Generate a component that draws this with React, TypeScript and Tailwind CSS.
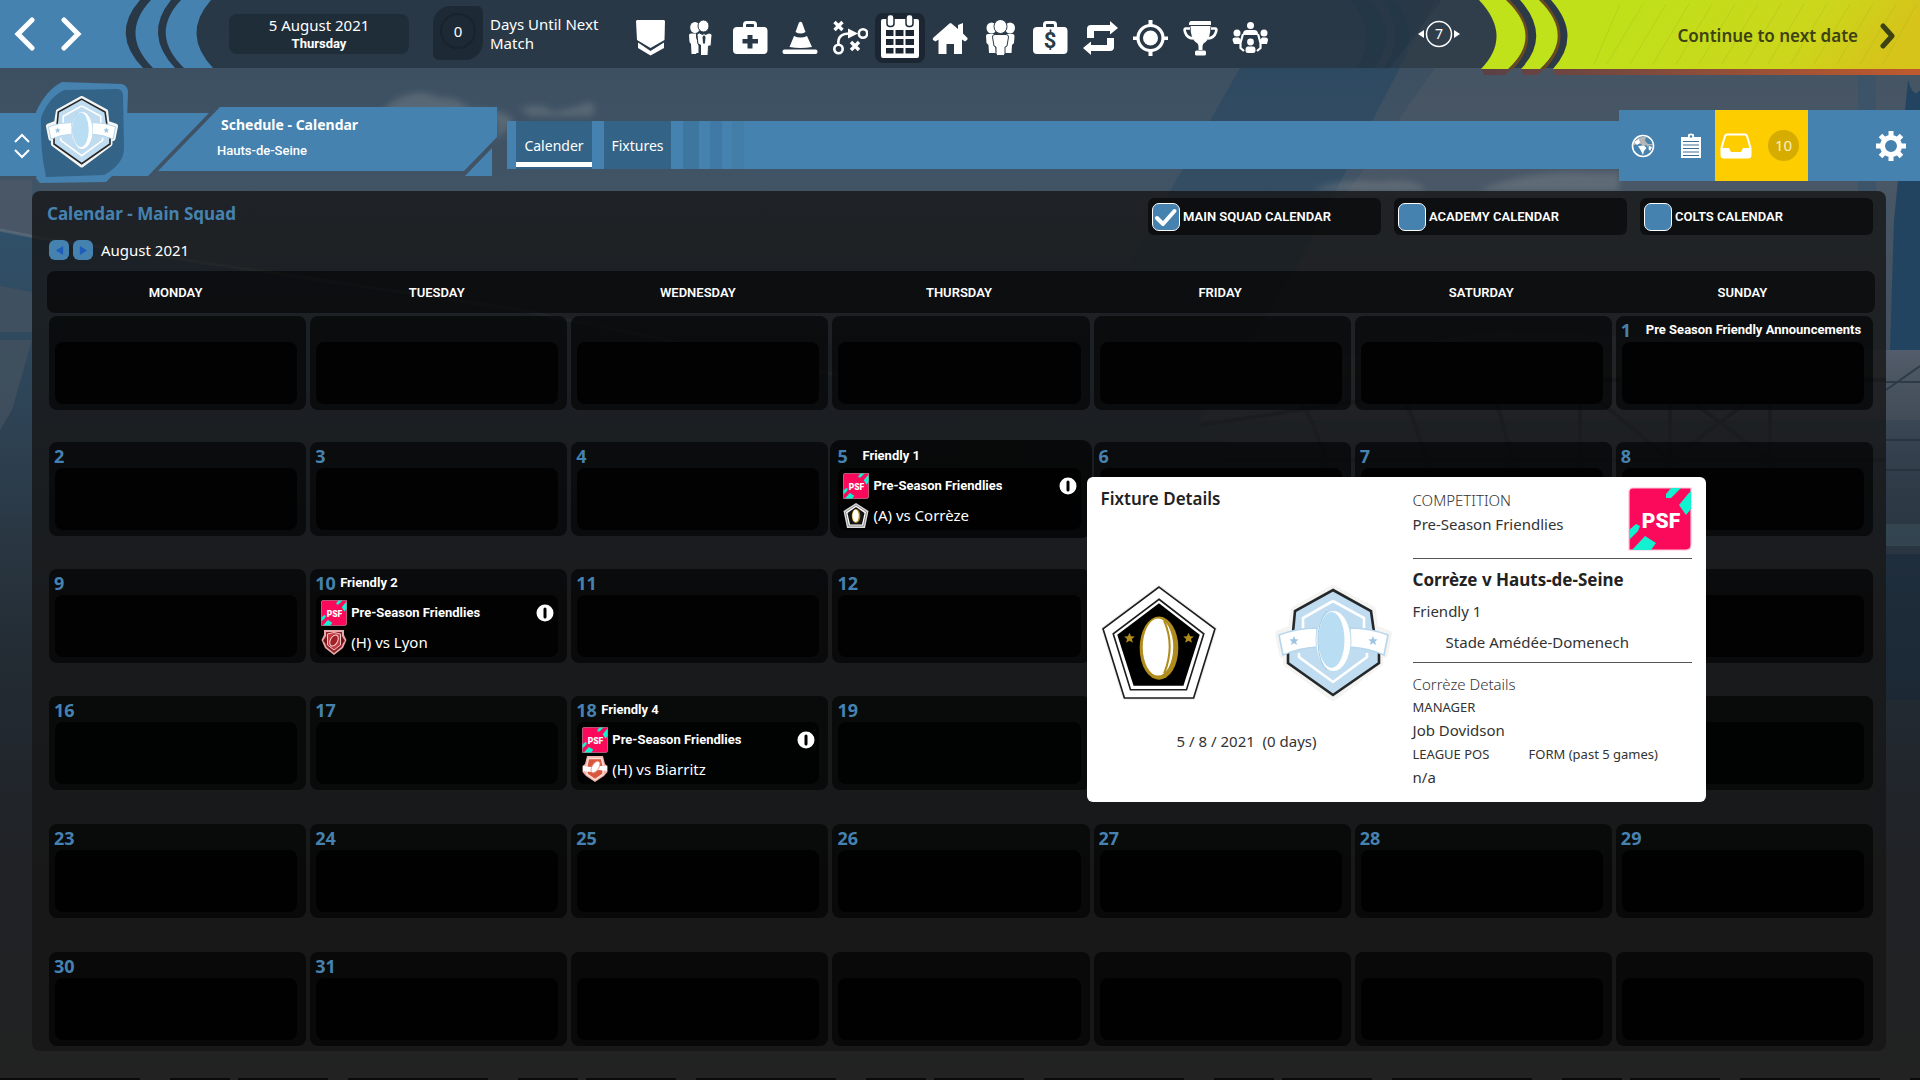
import type { ReactNode } from "react";

/* ---------- club and competition artwork ---------- */

function HautsCrest({ className, title }: { className: string; title: string }) {
  return (
    <svg viewBox="0 0 117 117" className={className} role="img" aria-label={title}>
      <path
        d="M58 4 97 25 99 44 113 49 109 69 104 70V78L58 112 12 78V70L8 69 4 49 17 44 20 25Z"
        fill="#f4f4f2"
        stroke="#f4f4f2"
        strokeWidth="8"
        strokeLinejoin="round"
      />
      <path d="M58 5 96 26 99 47 104 68V78L58 110 13 78V68L18 47 20 26Z" fill="#bfdcf0" stroke="#25282b" strokeWidth="2.6" />
      <path d="M58 16 89 33V48M58 16 28 33V48M24 68V72L58 97 92 72V68" fill="none" stroke="#fff" strokeWidth="2.6" />
      <path d="M4 50Q22 43 42 43V62Q24 63 8 70ZM113 50Q95 43 75 43V62Q93 63 109 70Z" fill="#fff" stroke="#b5d6ec" strokeWidth="1.6" />
      <ellipse cx="58.5" cy="56" rx="18" ry="32" fill="#bfdcf0" />
      <ellipse cx="58.5" cy="56" rx="17" ry="30" fill="#fff" />
      <ellipse cx="56.5" cy="55" rx="13" ry="28" fill="#b9def3" />
      <path d="M52 26Q42 38 43 58T52 85" fill="none" stroke="#9cc8e2" strokeWidth="1" />
      <path
        d="m19 51 1.3 3.2 3.4.2-2.6 2.2.9 3.4-3-1.9-3 1.9.9-3.4-2.6-2.2 3.4-.2ZM98 51l1.3 3.2 3.4.2-2.6 2.2.9 3.4-3-1.9-3 1.9.9-3.4-2.6-2.2 3.4-.2Z"
        fill="#9dc5e0"
      />
    </svg>
  );
}

function CorrezeCrest({ className, title }: { className: string; title: string }) {
  return (
    <svg viewBox="0 0 114 114" className={className} role="img" aria-label={title}>
      <path d="M57 2 112 43 91 111H23L2 43Z" fill="#efefef" stroke="#efefef" strokeWidth="4" strokeLinejoin="round" />
      <path d="M57 2 112 43 91 111H23L2 43Z" fill="#fff" stroke="#1d1d1d" strokeWidth="1.6" />
      <path d="M57 14 101 48 84 103H29L12 48Z" fill="#fff" stroke="#1d1d1d" strokeWidth="1.6" />
      <path d="M57 18 97 49 81 99H32L16 49Z" fill="#000" />
      <ellipse cx="57" cy="62" rx="19" ry="31" fill="#b08c1c" />
      <ellipse cx="56" cy="61" rx="15" ry="28" fill="#fff" />
      <path d="M62 35Q73 60 62 87" fill="none" stroke="#b08c1c" strokeWidth="2" />
      <path
        d="m28 47 1.5 3.4 3.7.3-2.8 2.4.9 3.7-3.3-2-3.3 2 .9-3.7-2.8-2.4 3.7-.3ZM86 47l1.5 3.4 3.7.3-2.8 2.4.9 3.7-3.3-2-3.3 2 .9-3.7-2.8-2.4 3.7-.3Z"
        fill="#b08c1c"
      />
    </svg>
  );
}

function SmallCorrezeCrest({ className, title }: { className: string; title: string }) {
  return (
    <svg viewBox="0 0 26 26" className={className} role="img" aria-label={title}>
      <path d="M13 1 25.500 9 22 26H4L.5 9Z" fill="#d9d9d9" />
      <path d="M13 3 23.500 10 20.500 24H5.500L2.500 10Z" fill="#fff" stroke="#8a8a8a" strokeWidth="1" />
      <path d="M13 5 21.500 11 19 22.500H7L4.500 11Z" fill="#141414" />
      <ellipse cx="13" cy="14" rx="4.300" ry="7" fill="#b08c1c" />
      <ellipse cx="12.600" cy="13.800" rx="3.200" ry="6.200" fill="#fff" />
    </svg>
  );
}

function LyonCrest({ className, title }: { className: string; title: string }) {
  return (
    <svg viewBox="0 0 26 26" className={className} role="img" aria-label={title}>
      <path d="M3 1H23V6L25.5 11 22 19 13 26 4 19 .5 11 3 6Z" fill="#e7a9aa" />
      <path d="M5 3H21V7L23.500 11 20.500 18 13 24 5.500 18 2.500 11 5 7Z" fill="#8f2026" />
      <path d="M6.500 5 13 3.500 19.500 5V16L13 21 6.500 16Z" fill="#c23a42" stroke="#efc3c3" strokeWidth="1" />
      <path d="M2 12 6 8V15Z M24 12 20 8V15Z" fill="#6d1519" />
      <ellipse cx="13" cy="11.500" rx="3.600" ry="6" transform="rotate(28 13 11.500)" fill="#a11f27" stroke="#f5d5d5" strokeWidth="1" />
    </svg>
  );
}

function BiarritzCrest({ className, title }: { className: string; title: string }) {
  return (
    <svg viewBox="0 0 26 26" className={className} role="img" aria-label={title}>
      <path d="M5 0H21L23 8 25.500 10V16L22 20 13 26 4 20 .5 16V10L3 8Z" fill="#f1b3aa" />
      <path d="M6.500 2.500H19.500L21 9V18L13 23.500 5 18V9Z" fill="#d9573f" stroke="#fbdcd6" strokeWidth="1.500" />
      <path d="M1 10 9 11 17 10 25 10V15L17 14 9 16 1 15Z" fill="#fff" />
      <ellipse cx="13.500" cy="11" rx="3.400" ry="6.500" transform="rotate(32 13.500 11)" fill="#fff" stroke="#e8897a" strokeWidth=".8" />
    </svg>
  );
}

function PsfLogo({ className }: { className: string }) {
  return (
    <svg viewBox="0 0 64 64" className={className} role="img" aria-label="PSF">
      <path d="M5 1H63V58Q63 63 58 63H1V5Q1 1 5 1Z" fill="#fb0a5c" stroke="#ffc2d6" strokeWidth="1.200" />
      <path d="M43 1H53L43 11H38V7ZM63 4V22L58 28 51 18 60 7Q62 5 63 4ZM1 43 8 37 12 39 10 44 1 53ZM5 62 17 49 28 56 23 63H4Z" fill="#12f2d0" />
      <text x="33" y="41" textAnchor="middle" className="fill-white font-['Roboto',sans-serif] text-[21px] font-black">
        PSF
      </text>
    </svg>
  );
}

/* ---------- navigation icons, all on a 36 x 36 grid ---------- */

function Glyph({ children }: { children: ReactNode }) {
  return (
    <svg viewBox="0 0 36 36" className="size-9" fill="currentColor" aria-hidden="true">
      {children}
    </svg>
  );
}

const navItems: { label: string; icon: ReactNode; active?: boolean }[] = [
  {
    label: "Club",
    icon: (
      <Glyph>
        <path d="M4 1 5 0H32L33 1 32.500 20 18.500 28 5 20Z" />
        <path d="M6 22.500 18.500 31 32 22.500V28L18.500 35.500 6 28Z" />
      </Glyph>
    ),
  },
  {
    label: "Staff",
    icon: (
      <Glyph>
        <ellipse cx="13" cy="7.500" rx="4.800" ry="5.500" />
        <path d="M7 15Q7 13.500 9 13.500H14V17L16.500 26V33H14.500L14 34H9.500L9 24 7.500 22Z" />
        <ellipse cx="21.500" cy="6" rx="5.500" ry="6" className="stroke-[#283a49]" />
        <path d="M15 15Q15 13 17.500 13L20.500 14.500 22 13.500 23.500 14.500 27 13Q30 13 30 15.500L29 26H26.500L26 35.500H18.500V25L16 24Z" className="stroke-[#283a49]" />
        <path d="m22 15 1.500 2-.5 6-1 1-1-1-.5-6Z" className="fill-[#283a49]" />
      </Glyph>
    ),
  },
  {
    label: "Medical",
    icon: (
      <Glyph>
        <path d="M11 7V4.500Q11 1 14.500 1H21.500Q25 1 25 4.500V7H32Q35.500 7 35.500 11V30Q35.500 34 31.500 34H5Q1 34 1 30V11Q1 7 5 7ZM14 7H22V5Q22 4 21 4H15Q14 4 14 5ZM15.500 15V19H10.500V23.500H15.500V28.500H20.500V23.500H26V19H20.500V15Z" fillRule="evenodd" />
      </Glyph>
    ),
  },
  {
    label: "Training",
    icon: (
      <Glyph>
        <path d="M17 2.500Q18.500 1 20 2.500L23.500 12Q18.500 15 13.500 12Z" />
        <path d="M12 16Q18.500 19 25 16L30 27Q18.500 29 7.500 27Z" />
        <rect x=".5" y="29.500" width="35" height="4.500" rx="2" />
      </Glyph>
    ),
  },
  {
    label: "Tactics",
    icon: (
      <Glyph>
        <g fill="none" stroke="currentColor" strokeWidth="2.600">
          <circle cx="6.500" cy="29" r="4.200" />
          <circle cx="31" cy="13.500" r="4.200" />
          <path d="M6.500 24.500Q5 13.500 18 13.500" />
        </g>
        <g stroke="currentColor" strokeWidth="3.400">
          <path d="m2.500 2 8 8M10.500 2l-8 8M19 22l8 8M27 22l-8 8" />
        </g>
        <path d="M16 8.500 26 13.500 16 18.500Z" />
      </Glyph>
    ),
  },
  {
    label: "Schedule",
    active: true,
    icon: (
      <svg viewBox="0 0 40 46" className="h-[46px] w-10" fill="currentColor" aria-hidden="true">
        <path d="M3 6H37Q39 6 39 8V43Q39 45 37 45H3Q1 45 1 43V8Q1 6 3 6ZM6 17V23H13.500V17ZM15.500 17V23H23.500V17ZM25.500 17V23H34V17ZM6 26V32H13.500V26ZM15.500 26V32H23.500V26ZM25.500 26V32H34V26ZM6 35V40.500H13.500V35ZM15.500 35V40.500H23.500V35ZM25.500 35V40.500H34V35Z" fillRule="evenodd" />
        <rect x="7" y="1.500" width="7" height="12" rx="3" className="stroke-[#1d2a36]" strokeWidth="1.500" />
        <rect x="26" y="1.500" width="7" height="12" rx="3" className="stroke-[#1d2a36]" strokeWidth="1.500" />
      </svg>
    ),
  },
  {
    label: "Stadium",
    icon: (
      <Glyph>
        <path d="M17.500 3.500Q18.500 2.500 19.500 3.500L26 9V5L31 3V13.500L35.500 18Q36 19 35 20L33 21.500 30 19.500V34H22V24H14.500V34H6.500V19.500L3.500 21.500 1 20Q.5 19 1 18Z" />
      </Glyph>
    ),
  },
  {
    label: "Squad",
    icon: (
      <Glyph>
        <ellipse cx="9.500" cy="8" rx="5" ry="5.500" />
        <ellipse cx="28" cy="8" rx="5" ry="5.500" />
        <path d="M4 16Q4 14 6 14H12L14 33H7L6.500 25 4.500 23ZM32.500 16Q32.500 14 30.500 14H24L22 33H29.500L30 25 32 23Z" />
        <ellipse cx="18.500" cy="6.500" rx="6.500" ry="7" className="stroke-[#2b3b4a]" />
        <path d="M10.500 17Q10.500 14.500 13 14.500H24Q26.500 14.500 26.500 17L25 26 23 27V34L21.500 35.500H15.500L14 34V27L12 26Z" className="stroke-[#2b3b4a]" />
      </Glyph>
    ),
  },
  {
    label: "Finance",
    icon: (
      <Glyph>
        <path d="M11 7V4.500Q11 1 14.500 1H21.500Q25 1 25 4.500V7H32Q35.500 7 35.500 11V30Q35.500 34 31.500 34H5Q1 34 1 30V11Q1 7 5 7ZM14 7H22V5Q22 4 21 4H15Q14 4 14 5Z" fillRule="evenodd" />
        <text x="18" y="28" textAnchor="middle" className="fill-[#2b3b4a] font-['Roboto',sans-serif] text-[22px] font-bold">
          $
        </text>
      </Glyph>
    ),
  },
  {
    label: "Transfers",
    icon: (
      <Glyph>
        <path d="M5 18V9Q5 5 9 5H28V1L36 8 28 14.500V11H12V18ZM32 18V27Q32 31 28 31H9V35L1 28 9 21.500V25H25V18Z" />
      </Glyph>
    ),
  },
  {
    label: "Scouting",
    icon: (
      <Glyph>
        <circle cx="18.500" cy="18" r="12.500" fill="none" stroke="currentColor" strokeWidth="3.200" />
        <circle cx="18.500" cy="18" r="7.500" />
        <path d="M16.500 0H20.500V6H16.500ZM16.500 30H20.500V36H16.500ZM1 16.500H7V20H1ZM30 16.500H36V20H30Z" />
      </Glyph>
    ),
  },
  {
    label: "Competitions",
    icon: (
      <Glyph>
        <path d="M8 1.500Q8 1 9 1H28Q29 1 29 2V5H7V3Z" />
        <path d="M8.500 6H28.500Q28.500 18 23.500 22 20.500 23.500 20.500 26V30H16.500V26Q16.500 23.500 13.500 22 8.500 18 8.500 6Z" />
        <path d="M8 8.500H3.500Q2 8.500 3 12 5 18 11 18.500M29 8.500H33.500Q35 8.500 34 12 32 18 26 18.500" fill="none" stroke="currentColor" strokeWidth="2.600" />
        <rect x="13" y="30.500" width="11" height="5" rx="1.500" />
      </Glyph>
    ),
  },
  {
    label: "Board",
    icon: (
      <Glyph>
        <circle cx="18.500" cy="5.500" r="3.500" />
        <circle cx="5" cy="13" r="3.500" />
        <circle cx="32" cy="13" r="3.500" />
        <path d="M11 14Q11 10 15 10H22Q26 10 26 14L25 15H12ZM.5 20Q.5 17.500 3 17.500H7L9 20 8 24H2ZM36 20Q36 17.500 33.500 17.500H30L28 20 29 24H35Z" />
        <circle cx="18.500" cy="22" r="3.400" />
        <path d="M13.500 30Q13.500 26.500 16 26.500H21Q23.500 26.500 23.500 30V31Q23.500 33 21 33H16Q13.500 33 13.500 31Z" />
        <path d="M11 14 8.500 23V28L12 31M26 14 28.500 23V28L25 31" fill="none" stroke="currentColor" strokeWidth="2.200" />
      </Glyph>
    ),
  },
];

/* ---------- backdrop: sky, light beam and stadium silhouette ---------- */

function Backdrop() {
  return (
    <svg className="pointer-events-none absolute inset-0 h-full w-full" viewBox="0 0 1920 1080" preserveAspectRatio="none" aria-hidden="true">
      <defs>
        <linearGradient id="sky" x1="0" y1="0" x2="0" y2="1">
          <stop offset="0" stopColor="#3a4e60" />
          <stop offset=".17" stopColor="#415466" />
          <stop offset=".35" stopColor="#344657" />
          <stop offset=".6" stopColor="#232c34" />
          <stop offset=".8" stopColor="#202226" />
          <stop offset="1" stopColor="#222" />
        </linearGradient>
        <linearGradient id="beam" x1="0" y1="0" x2="0" y2="1">
          <stop offset="0" stopColor="#244560" stopOpacity=".6" />
          <stop offset="1" stopColor="#244560" stopOpacity="0" />
        </linearGradient>
        <linearGradient id="fade" x1="0" y1="0" x2="0" y2="1">
          <stop offset="0" stopColor="#5a6270" stopOpacity=".7" />
          <stop offset="1" stopColor="#2b3036" stopOpacity="0" />
        </linearGradient>
        <linearGradient id="stand" x1="0" y1="0" x2="0" y2="1">
          <stop offset="0" stopColor="#26506e" stopOpacity=".6" />
          <stop offset="1" stopColor="#1f3a4e" stopOpacity="0" />
        </linearGradient>
        <filter id="soft">
          <feGaussianBlur stdDeviation="3" />
        </filter>
      </defs>
      <rect width="1920" height="1080" fill="url(#sky)" />
      <path d="M1240 68H1435L1300 260 1180 560H960Z" fill="url(#beam)" />
      <path d="M1435 0H1920V420H1200L1300 260Z" fill="#565c66" fillOpacity=".4" />
      <g filter="url(#soft)" fill="#7f868d" fillOpacity=".4">
        <path d="M376 118Q392 98 410 94 424 90 440 98 458 96 468 108L500 112Q520 118 508 128L497 140V122H376ZM520 108Q545 102 552 112 575 108 590 102 600 110 590 116H530Z" />
        <path d="M1312 191Q1340 178 1380 182 1420 178 1425 191H1312ZM1480 190Q1520 172 1580 172 1600 174 1619 172V191H1480Z" />
      </g>
      <path d="M0 180H32V236L0 230Z" fill="#4d5967" fillOpacity=".7" />
      <path d="M0 230 40 238 520 310 960 400 960 560H0Z" fill="url(#stand)" />
      <path d="M0 230 40 238 520 310 960 400" fill="none" stroke="#6d7a86" strokeWidth="3" strokeOpacity=".5" />
      <path d="M0 286 32 292V332H0ZM0 340H32L12 410 0 430Z" fill="#46535f" fillOpacity=".7" />
      <g fill="#31526c" fillOpacity=".45">
        <path d="M1858 74H1876V191H1858Z" />
      </g>
      <path d="M1908 80Q1914 100 1920 90V350H1890L1894 220Z" fill="#1f4260" fillOpacity=".9" />
      <path d="M1886 350H1920V525H1886Z" fill="url(#fade)" />
      <path d="M1200 380 1500 330 1886 350V560H1200Z" fill="url(#fade)" />
      <g fill="none" stroke="#22303b" strokeWidth="4" strokeOpacity=".7">
        <path d="M1200 425 1500 380 1886 380M1220 460H1886M1300 400Q1330 450 1340 530M1400 390Q1430 450 1438 530M1490 385Q1515 450 1520 530M1580 385V530M1670 385V530M1770 385V530M1580 385 1670 460M1670 385 1770 460M1770 385 1670 460" />
        <path d="M1886 390 1920 366M1886 382H1920M1886 440H1920M1886 470H1920" strokeWidth="2" />
      </g>
      <path d="M1886 524H1920V546H1886Z" fill="#3b4f5a" fillOpacity=".6" />
      <path d="M1886 554H1920V700H1886Z" fill="#16283a" fillOpacity=".5" />
      <path d="M0 1079H1920" stroke="#0a0a0a" strokeWidth="2" strokeDasharray="140 30 60 8 90 20" />
    </svg>
  );
}

/* ---------- calendar data ---------- */

type Fixture = { label: string; versus?: string; crest?: ReactNode };
type Day = { date?: number; fixture?: Fixture; open?: boolean };

const fixtures: Record<number, Fixture> = {
  1: { label: "Pre Season Friendly Announcements" },
  5: { label: "Friendly 1", versus: "(A) vs Corrèze", crest: <SmallCorrezeCrest className="size-[26px]" title="Corrèze" /> },
  10: { label: "Friendly 2", versus: "(H) vs Lyon", crest: <LyonCrest className="size-[26px]" title="Lyon" /> },
  18: { label: "Friendly 4", versus: "(H) vs Biarritz", crest: <BiarritzCrest className="size-[26px]" title="Biarritz" /> },
};

const weekdays = ["Monday", "Tuesday", "Wednesday", "Thursday", "Friday", "Saturday", "Sunday"];

const weeks: Day[][] = Array.from({ length: 6 }, (_, week) =>
  weekdays.map((_, weekday) => {
    const date = week * 7 + weekday - 5;
    return date < 1 || date > 31 ? {} : { date, fixture: fixtures[date], open: date === 5 };
  }),
);

const weekGaps = ["pb-8", "pb-[33px]", "pb-[33px]", "pb-[34px]", "pb-[34px]", ""];

function FixtureCard() {
  return (
    <aside className="absolute top-[35px] left-full z-10 -ml-[3px] flex h-[325px] w-[619px] rounded-md bg-white pt-[10px] pr-[14px] pl-[14px] text-left font-normal text-[#333]">
      <div className="flex w-[312px] flex-col">
        <h2 className="text-[17px] leading-[24px] font-semibold text-[#222]">Fixture Details</h2>
        <div className="mt-[74px] flex gap-[58px]">
          <CorrezeCrest className="size-[116px]" title="Corrèze" />
          <HautsCrest className="size-[117px]" title="Hauts-de-Seine" />
        </div>
        <p className="mt-[29px] w-[292px] text-center text-[15px] leading-5 whitespace-pre">5 / 8 / 2021  (0 days)</p>
      </div>
      <div className="flex flex-1 flex-col">
        <div className="flex h-[72px] justify-between border-b border-[#555]">
          <div className="pt-px">
            <h3 className="text-[15px] leading-6 font-light">COMPETITION</h3>
            <p className="text-[15px] leading-6">Pre-Season Friendlies</p>
          </div>
          <PsfLogo className="size-16" />
        </div>
        <div className="h-[104px] border-b border-[#555] pt-[9px]">
          <h3 className="text-[17px] leading-6 font-bold text-[#222]">Corrèze v Hauts-de-Seine</h3>
          <p className="mt-[7px] text-[15px] leading-6">Friendly 1</p>
          <p className="mt-[7px] pl-[33px] text-[15px] leading-6">Stade Amédée-Domenech</p>
        </div>
        <div className="pt-[10px]">
          <h3 className="text-[15px] leading-[23px] font-light">Corrèze Details</h3>
          <p className="text-[13px] leading-[23px]">MANAGER</p>
          <p className="text-[15px] leading-[23px]">Job Dovidson</p>
          <div className="flex text-[13px] leading-6">
            <p className="w-[116px]">LEAGUE POS</p>
            <p>FORM (past 5 games)</p>
          </div>
          <p className="text-[15px] leading-[23px]">n/a</p>
        </div>
      </div>
    </aside>
  );
}

function DayCell({ date, fixture, open }: Day) {
  return (
    <div className="relative">
      <div
        className={
          open
            ? "h-[94px] rounded-lg bg-black/70 outline-2 outline-black/70"
            : "h-[94px] rounded-lg bg-black/60"
        }
      >
        <div className="flex h-[26px] items-center pt-[2px] pl-[5px]">
          <span className="w-[25px] text-[18px] leading-6 font-bold text-[#4682b0]">{date}</span>
          {fixture && <span className="font-['Roboto',sans-serif] text-[13px] font-bold whitespace-nowrap text-white">{fixture.label}</span>}
        </div>
        <div className="mr-[9px] ml-[6px] h-[62px] rounded-lg bg-black/80 pt-1 pl-[5px]">
          {fixture?.versus && (
            <>
              <div className="flex h-7 items-center gap-1">
                <PsfLogo className="size-[26px]" />
                <span className="flex-1 font-['Roboto',sans-serif] text-[13px] font-bold text-white">Pre-Season Friendlies</span>
                <button type="button" aria-label={`Details of ${fixture.label}`} className="mr-1">
                  <svg viewBox="0 0 18 18" className="size-[18px]" aria-hidden="true">
                    <circle cx="9" cy="9" r="8.500" fill="#fff" />
                    <rect x="7.500" y="3.500" width="3" height="11" rx="1.500" />
                  </svg>
                </button>
              </div>
              <div className="mt-0.5 flex h-[26px] items-center gap-1">
                {fixture.crest}
                <span className="text-[15px] text-white">{fixture.versus}</span>
              </div>
            </>
          )}
        </div>
      </div>
      {open && <FixtureCard />}
    </div>
  );
}

function Filter({ label, checked }: { label: string; checked?: boolean }) {
  return (
    <label className="flex h-[37px] w-[233px] items-center gap-[3px] rounded-md bg-black/55 pl-1 font-['Roboto',sans-serif] text-[13px] font-semibold text-white uppercase">
      <span className="relative flex size-7">
        <input type="checkbox" defaultChecked={checked} className="peer size-7 appearance-none rounded-[7px] border border-white bg-[#4682b0]" />
        <svg viewBox="0 0 28 28" className="pointer-events-none absolute inset-0 hidden size-7 peer-checked:block" aria-hidden="true">
          <path d="m5 15 6 6L22.500 8" fill="none" stroke="#fff" strokeWidth="4" strokeLinecap="round" strokeLinejoin="round" />
        </svg>
      </span>
      {label}
    </label>
  );
}

/* ---------- page sections ---------- */

function TopBar() {
  return (
    <header className="relative flex h-[68px] bg-[#1d2a36]/60 text-white">
      <svg className="absolute top-0 right-[420px] h-[68px] w-[260px]" viewBox="0 0 260 68" aria-hidden="true">
        <path d="M110 0Q140 34 116 68H134Q160 34 130 0ZM142 0Q168 34 144 68H158Q182 34 154 0Z" fill="#1f3748" fillOpacity=".6" />
        <path d="M202 0H260V68H150Z" fill="#3a4754" fillOpacity=".35" />
      </svg>
      <div className="relative flex w-[229px] gap-[18px] pt-[17px] pl-[14px]">
        <svg className="absolute top-0 left-0 h-[68px] w-[214px]" viewBox="0 0 214 68" fill="#4682b0" aria-hidden="true">
          <path d="M0 0H140Q110 34 143 68H0Z" />
          <path d="M151 0H171Q143 34 175 68H153Q119 34 151 0Z" />
          <path d="M181 0H211Q181 34 213 68H184Q149 34 181 0Z" />
        </svg>
        <button type="button" aria-label="Back" className="relative h-[34px] w-7">
          <svg viewBox="0 0 28 34" className="h-[34px] w-7" aria-hidden="true">
            <path d="M18 3 4 17 18 31" fill="none" stroke="#fff" strokeWidth="5" strokeLinecap="round" />
          </svg>
        </button>
        <button type="button" aria-label="Forward" className="relative h-[34px] w-7">
          <svg viewBox="0 0 28 34" className="h-[34px] w-7" aria-hidden="true">
            <path d="M4 3 18 17 4 31" fill="none" stroke="#fff" strokeWidth="5" strokeLinecap="round" />
          </svg>
        </button>
      </div>
      <div className="relative mt-[14px] h-10 w-[180px] rounded-lg bg-[#1d2a36]/80 pt-px text-center">
        <p className="text-[15px] leading-5">5 August 2021</p>
        <p className="font-['Roboto',sans-serif] text-[13px] leading-[17px] font-bold">Thursday</p>
      </div>
      <div className="relative mt-[6px] ml-6 flex h-[54px] w-[50px] items-center justify-center rounded-md rounded-tl-[18px] rounded-br-[18px] bg-[#1a2530]/80 pb-1">
        <span className="flex size-9 items-center justify-center rounded-full border-2 border-[#16202a]/60 text-[15px]">0</span>
      </div>
      <p className="relative mt-[15px] ml-[7px] w-[135px] pr-4 text-[15px] leading-[19px]">Days Until Next Match</p>
      <nav aria-label="Main" className="relative flex items-start pt-[13px]">
        {navItems.map((item) => (
          <button
            key={item.label}
            type="button"
            aria-label={item.label}
            className={
              item.active
                ? "flex size-[50px] items-center justify-center rounded-lg bg-[#1a2530]/90 pb-1"
                : "flex size-[50px] items-center justify-center"
            }
          >
            {item.icon}
          </button>
        ))}
      </nav>
      <div className="relative ml-auto flex">
        <button type="button" aria-label="Processing days: 7" className="w-[62px]">
          <svg viewBox="0 0 44 30" className="h-[30px] w-11" aria-hidden="true">
            <circle cx="22" cy="15" r="12.500" fill="none" stroke="#fff" strokeWidth="1.500" />
            <path d="M1 15 7 11V19ZM43 15 37 11V19Z" fill="#fff" />
            <text x="22" y="20" textAnchor="middle" className="fill-white font-['Noto_Sans',sans-serif] text-[14px]">
              7
            </text>
          </svg>
        </button>
        <button type="button" className="relative flex h-[76px] w-[441px] items-start justify-end gap-5 pt-[23px] pr-[22px] text-[#3d4212]">
          <svg className="absolute inset-0 h-[76px] w-[441px]" viewBox="0 0 441 76" aria-hidden="true">
            <defs>
              <linearGradient id="go" x1="0" x2="1" y1="0" y2=".15">
                <stop offset=".25" stopColor="#c0e01a" />
                <stop offset=".75" stopColor="#ccd61b" />
                <stop offset="1" stopColor="#d6c41a" />
              </linearGradient>
              <linearGradient id="glow" x1="0" x2="1">
                <stop offset="0" stopColor="#5a4145" />
                <stop offset="1" stopColor="#c05a2e" />
              </linearGradient>
            </defs>
            <path d="M3 69H32L26 75H5ZM42 69H65L58 75H44ZM74 69H441V75H76Z" fill="url(#glow)" />
            <path d="M27 0Q63 36 30 69H34Q66 36 31 0ZM60 0Q96 36 62 69H66Q98 36 64 0Z" fill="#6b4a20" />
            <path d="M0 0H27Q65 36 29 69H2Q34 36 0 0ZM41 0H60Q97 36 61 69H42Q73 36 41 0Z" fill="#bfe21a" />
            <path d="M72 0H441V69H74Q104 36 72 0Z" fill="url(#go)" />
            <path d="M141 4 115 64M164 4 128 64M187 4 151 64M210 4 174 64M233 4 197 64M256 4 220 64M279 4 243 64M302 4 266 64M325 4 289 64M348 4 312 64M371 4 335 64M394 4 358 64M417 4 381 64M438 4 404 64" stroke="#9fae1e" strokeOpacity=".3" fill="none" />
          </svg>
          <span className="relative text-[17px] leading-[26px] font-semibold">Continue to next date</span>
          <svg viewBox="0 0 20 26" className="relative h-[26px] w-5" aria-hidden="true">
            <path d="M5 3 14 13 5 23" fill="none" stroke="currentColor" strokeWidth="5" strokeLinecap="round" strokeLinejoin="round" />
          </svg>
        </button>
      </div>
    </header>
  );
}

function ScreenBar() {
  return (
    <div className="relative flex h-[123px] items-start text-white">
      <div className="relative h-[123px] w-[507px]">
        <svg className="absolute inset-0 h-[123px] w-[507px]" viewBox="0 68 507 123" fill="#4682b0" aria-hidden="true">
          <path d="M0 113H209L148 176H0Z" />
          <path d="M220 107H497V137L464 171H158Z" />
          <path d="M492 148V176H465Z" />
          <path d="M36 112Q46 90 62 82L122 84Q128 86 128 92L126 150 124 164 106 182 40 183 36 178 40 165Z" />
          <path d="M41 118Q48 98 64 90L118 89Q123 90 123 96L124 148Q124 164 104 175L46 177Q40 150 41 118Z" fill="#336386" />
        </svg>
        <div className="relative flex items-start">
          <div className="flex w-[42px] flex-col items-center pt-[63px] pl-[2px]">
            <button type="button" aria-label="Previous club" className="h-[15px]">
              <svg viewBox="0 0 18 15" className="h-[15px] w-[18px]" aria-hidden="true">
                <path d="m2 11 7-7 7 7" fill="none" stroke="#fff" strokeWidth="2" />
              </svg>
            </button>
            <button type="button" aria-label="Next club" className="h-[15px]">
              <svg viewBox="0 0 18 15" className="h-[15px] w-[18px]" aria-hidden="true">
                <path d="m2 4 7 7 7-7" fill="none" stroke="#fff" strokeWidth="2" />
              </svg>
            </button>
          </div>
          <HautsCrest className="mt-[28px] ml-1 size-[72px]" title="Hauts-de-Seine" />
          <div className="pt-[45px] pl-[99px]">
            <h1 className="pl-1 text-[14px] leading-6 font-bold">Schedule - Calendar</h1>
            <p className="mt-[2px] font-['Roboto',sans-serif] text-[13px] leading-6 font-medium">Hauts-de-Seine</p>
          </div>
        </div>
      </div>
      <nav aria-label="Schedule views" className="mt-[53px] flex h-12 flex-1 bg-[#4682b0] pl-[9px] text-[14px]">
        <a href="#calendar" aria-current="page" className="relative flex w-[76px] items-center justify-center bg-[#336386]">
          Calender
          <span className="absolute inset-x-0 bottom-[2px] h-[5px] bg-white" />
        </a>
        <a href="#fixtures" className="ml-3 flex w-[67px] items-center justify-center bg-[#336386]">
          Fixtures
        </a>
        <span className="ml-3 w-4 bg-[#3d769f]" />
        <span className="ml-[11px] w-3 bg-[#4079a5]" />
        <span className="ml-[10px] w-3 bg-[#437ea9]" />
      </nav>
      <div className="mt-[42px] flex h-[71px] items-center bg-[#4682b0]">
        <button type="button" aria-label="World" className="flex w-12 items-center justify-center">
          <svg viewBox="0 0 24 24" className="size-6" aria-hidden="true">
            <circle cx="12" cy="12" r="10.500" fill="#4682b0" stroke="#fff" strokeWidth="1.600" />
            <path d="M8 3.500 14 2.500 20 7 22 12 19 11 17 13 15 11 12 12 10 10 6 9 4 11 2 11Q4 6 8 3.500Z" fill="#b5b5b5" />
            <path d="M15 3 20 6.500 21.500 10 17 10 14 7Z" fill="#4682b0" />
            <path d="M3 8 8 5 9 9 6 11ZM7 12 13 11.500 15.500 14 13 17 12 21 9.500 16ZM18 12 21 13 19 17 17.500 15Z" fill="#fff" />
          </svg>
        </button>
        <button type="button" aria-label="Notes" className="flex w-12 items-center justify-center">
          <svg viewBox="0 0 22 26" className="h-[26px] w-[22px]" aria-hidden="true">
            <path d="M1 4H8V2Q8 .5 11 .5T14 2V4H21V25H1Z" fill="#fff" />
            <circle cx="11" cy="3.500" r="1.300" fill="#4682b0" />
            <path d="M3 8.500H19M3 12H19M3 15.500H19M3 19H19M3 22.500H19" stroke="#3a6f98" strokeWidth="1.200" />
          </svg>
        </button>
        <button type="button" aria-label="Inbox, 10 messages" className="flex h-[71px] w-[93px] items-center gap-4 bg-[#fecd00] pl-[5px]">
          <svg viewBox="0 0 32 26" className="h-[26px] w-8" aria-hidden="true">
            <path d="M7 1.500H25Q26.500 1.500 27 3L30.500 15V22Q30.500 24.500 28 24.500H4Q1.500 24.500 1.500 22V15L5 3Q5.500 1.500 7 1.500Z" fill="none" stroke="#fff" strokeWidth="2" />
            <path d="M1.500 15H9L11 19H21L23 15H30.500V24H1.500Z" fill="#fff" />
          </svg>
          <span className="flex size-[31px] items-center justify-center rounded-full bg-[#d6ac00] text-[15px] text-[#fbf0c0]">10</span>
        </button>
        <button type="button" aria-label="Settings" className="flex w-28 justify-end pr-[13px]">
          <svg viewBox="0 0 32 32" className="size-8" aria-hidden="true">
            <circle cx="16" cy="16" r="8.500" fill="none" stroke="#fff" strokeWidth="5" />
            <path d="M16 1V7M16 25V31M1 16H7M25 16H31M5.500 5.500 9.500 9.500M22.500 22.500 26.500 26.500M26.500 5.500 22.500 9.500M5.500 26.500 9.500 22.500" stroke="#fff" strokeWidth="5" />
          </svg>
        </button>
      </div>
    </div>
  );
}

export default function App() {
  return (
    <div className="relative min-h-screen overflow-hidden bg-[#222] font-['Noto_Sans',sans-serif]">
      <Backdrop />
      <TopBar />
      <ScreenBar />
      <main className="relative mr-[34px] mb-[29px] ml-8 rounded-lg bg-[#161616]/80 pt-[7px] pr-[11px] pb-[5px] pl-[15px]">
        <div className="flex items-start justify-between pr-0.5">
          <h2 className="pt-[3px] text-[17px] leading-[26px] font-bold text-[#4682b0]">Calendar - Main Squad</h2>
          <div className="flex gap-[13px]">
            <Filter label="Main Squad Calendar" checked />
            <Filter label="Academy Calendar" />
            <Filter label="Colts Calendar" />
          </div>
        </div>
        <div className="mt-[3px] flex h-6 items-center gap-1 pl-0.5">
          <button type="button" aria-label="Previous month" className="flex size-5 items-center justify-center rounded-md bg-[#4682b0]">
            <svg viewBox="0 0 10 10" className="size-[9px]" aria-hidden="true">
              <path d="M9 0V10L1 5Z" fill="#1d5cb8" />
            </svg>
          </button>
          <button type="button" aria-label="Next month" className="flex size-5 items-center justify-center rounded-md bg-[#4682b0]">
            <svg viewBox="0 0 10 10" className="size-[9px]" aria-hidden="true">
              <path d="M1 0V10L9 5Z" fill="#1d5cb8" />
            </svg>
          </button>
          <p className="pl-1 text-[15px] text-white">August 2021</p>
        </div>
        <table className="mt-[9px] w-full table-fixed border-separate border-spacing-0">
          <thead>
            <tr>
              {weekdays.map((day) => (
                <th
                  key={day}
                  scope="col"
                  className="h-[42px] bg-black/55 p-0 pt-[2px] pr-1 font-['Roboto',sans-serif] text-[13px] font-semibold text-white uppercase first:rounded-l-lg last:rounded-r-lg"
                >
                  {day}
                </th>
              ))}
            </tr>
          </thead>
          <tbody>
            {weeks.map((week, index) => (
              <tr key={index}>
                {week.map((day, weekday) => (
                  <td key={weekday} className={`px-0.5 align-top ${index === 0 ? "pt-[3px]" : "pt-0"} ${weekGaps[index]}`}>
                    <DayCell {...day} />
                  </td>
                ))}
              </tr>
            ))}
          </tbody>
        </table>
      </main>
    </div>
  );
}
